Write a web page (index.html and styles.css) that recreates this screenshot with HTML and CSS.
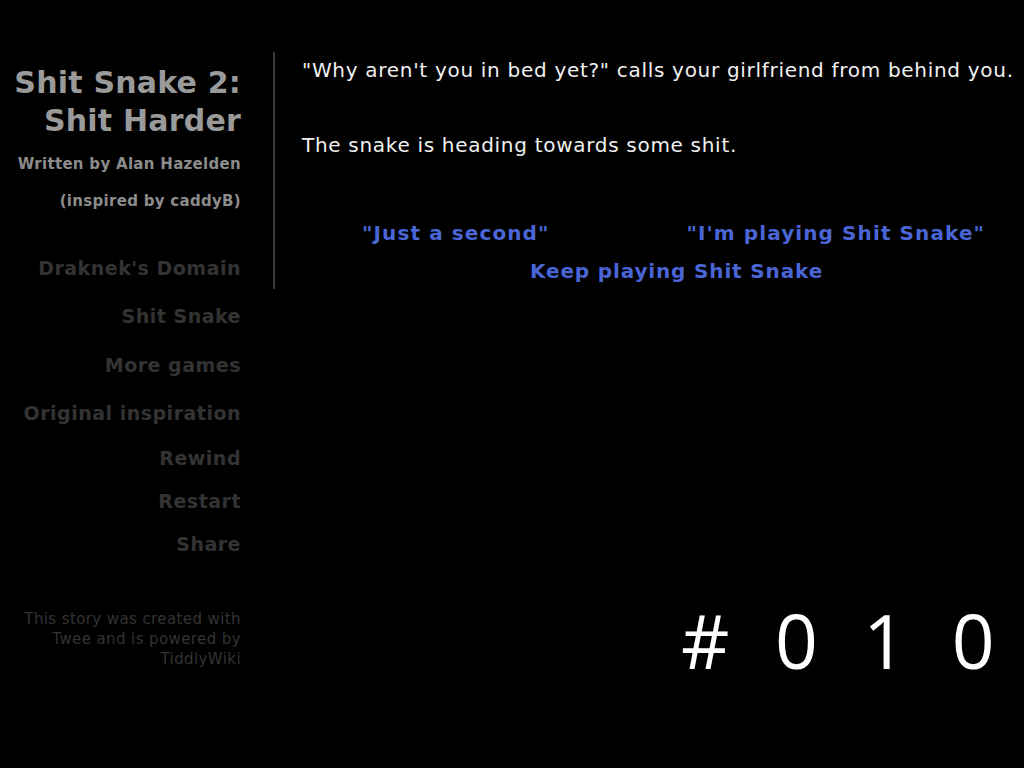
FILE: index.html
```html
<!DOCTYPE html>
<html>
<head>
<meta charset="utf-8">
<link rel="stylesheet" href="styles.css">
</head>
<body>
<div class="page">
  <aside class="sidebar">
    <div class="side-inner">
      <h1 class="title">Shit Snake 2:<br>Shit Harder</h1>
      <div class="credit">Written by Alan Hazelden</div>
      <div class="credit inspired">(inspired by caddyB)</div>
      <nav class="menu">
        <a class="menu-item first">Draknek's Domain</a>
        <a class="menu-item m2">Shit Snake</a>
        <a class="menu-item m3">More games</a>
        <a class="menu-item m4">Original inspiration</a>
        <a class="menu-item m5">Rewind</a>
        <a class="menu-item m6">Restart</a>
        <a class="menu-item m7">Share</a>
      </nav>
      <div class="footer">This story was created with<br>Twee and is powered by<br>TiddlyWiki</div>
    </div>
    <div class="divider"></div>
  </aside>
  <main class="story">
    <p class="line">"Why aren't you in bed yet?" calls your girlfriend from behind you.</p>
    <p class="line second">The snake is heading towards some shit.</p>
    <div class="choices">
      <a class="choice c1">"Just a second"</a>
      <a class="choice c2">"I'm playing Shit Snake"</a>
    </div>
    <div class="choices centre">
      <a class="choice c3">Keep playing Shit Snake</a>
    </div>
    <div class="slide-num">#&nbsp;0&nbsp;1&nbsp;0</div>
  </main>
</div>
</body>
</html>
```

FILE: styles.css
```css
html, body {
  margin: 0;
  padding: 0;
  background: #000;
  width: 1024px;
  height: 768px;
  overflow: hidden;
}
body {
  font-family: "DejaVu Sans", Verdana, sans-serif;
}
.page {
  display: flex;
  width: 1024px;
  height: 768px;
}
.sidebar {
  width: 275px;
  display: flex;
  flex-shrink: 0;
  position: relative;
}
.side-inner {
  width: 241px;
  text-align: right;
  padding-top: 64px;
}
.divider {
  position: absolute;
  left: 273px;
  top: 52px;
  width: 2px;
  height: 237px;
  background: #3a3a3a;
}
.title {
  margin: 0;
  font-size: 30px;
  line-height: 38px;
  font-weight: bold;
  color: #9a9a9a;
  letter-spacing: 0.2px;
}
.credit {
  margin-top: 15px;
  font-size: 15px;
  font-weight: bold;
  color: #8c8c8c;
  line-height: 18px;
  letter-spacing: 0.3px;
}
.credit.inspired {
  margin-top: 19px;
}
.menu {
  display: flex;
  flex-direction: column;
  align-items: flex-end;
  margin-top: 47px;
}
.menu-item {
  font-size: 19px;
  font-weight: bold;
  color: #333;
  line-height: 22px;
  letter-spacing: 0.5px;
}
.m2 { margin-top: 26px; }
.m3 { margin-top: 27px; }
.m4 { margin-top: 26px; }
.m5 { margin-top: 23px; }
.m6 { margin-top: 21px; }
.m7 { margin-top: 21px; }
.footer {
  margin-top: 54px;
  font-size: 15px;
  color: #333;
  line-height: 20px;
  letter-spacing: 0.4px;
}
.story {
  flex: 1;
  padding-left: 27px;
  padding-top: 57px;
  position: relative;
}
.line {
  margin: 0;
  font-size: 20px;
  line-height: 26px;
  color: #f0f0f0;
  letter-spacing: 0.7px;
  white-space: nowrap;
}
.line.second {
  margin-top: 49px;
}
.choices {
  display: flex;
  gap: 137px;
  margin-top: 62px;
  padding-left: 60px;
}
.choices.centre {
  margin-top: 12px;
  padding-left: 228px;
}
.choice {
  font-size: 20px;
  font-weight: bold;
  color: #4a66d6;
  line-height: 26px;
  letter-spacing: 1.1px;
  white-space: nowrap;
}
.choice.c3 {
  letter-spacing: 0.85px;
}
.slide-num {
  position: absolute;
  left: 406px;
  top: 590px;
  font-family: "Open Sans", "DejaVu Sans", sans-serif;
  font-size: 75px;
  line-height: 100px;
  color: #fff;
  letter-spacing: 13px;
}
```
